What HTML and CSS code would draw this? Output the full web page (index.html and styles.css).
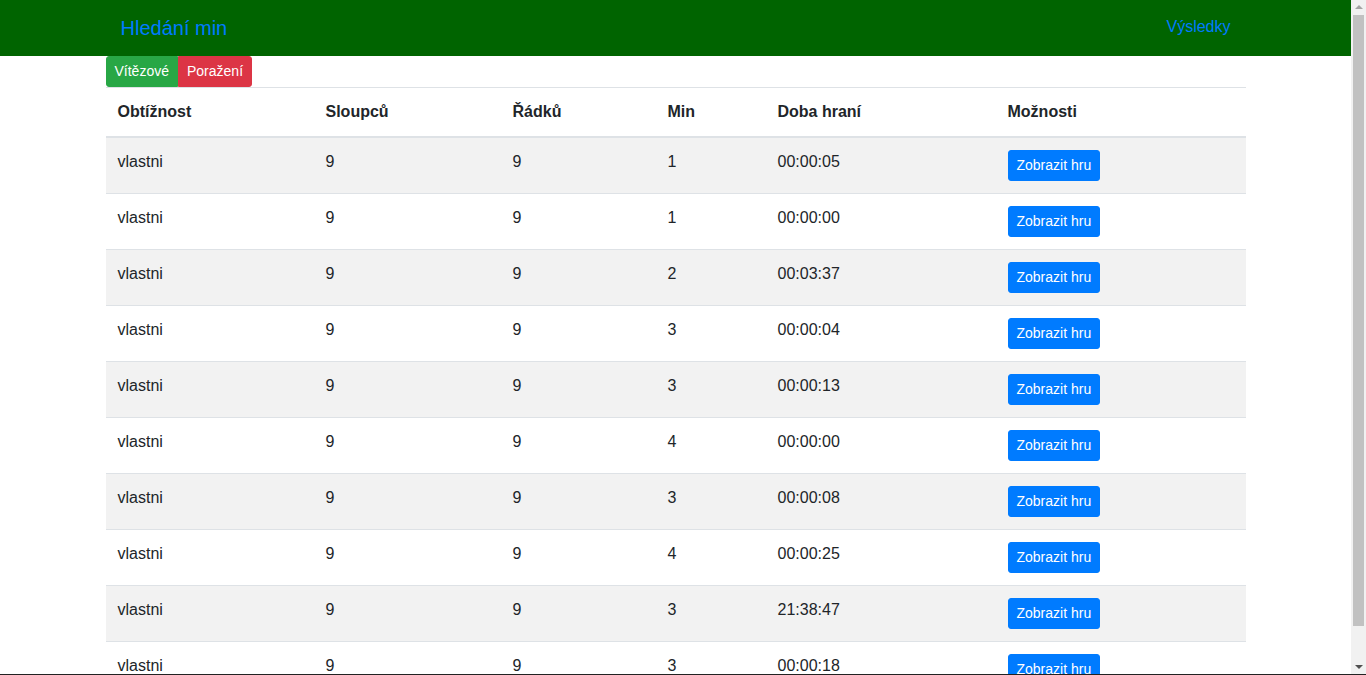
FILE: index.html
```html
<!DOCTYPE html>
<html lang="cs">
<head>
<meta charset="utf-8">
<title>Hledání min</title>
<link rel="stylesheet" href="styles.css">
</head>
<body>
<nav class="navbar">
  <div class="nav-inner">
    <a class="brand" href="#">Hledání min</a>
    <a class="nav-link" href="#">Výsledky</a>
  </div>
</nav>
<main class="container">
  <div class="btn-group">
    <button class="btn btn-sm btn-success">Vítězové</button>
    <button class="btn btn-sm btn-danger">Poražení</button>
  </div>
  <table class="table">
    <thead>
      <tr>
        <th class="c1">Obtížnost</th>
        <th class="c2">Sloupců</th>
        <th class="c3">Řádků</th>
        <th class="c4">Min</th>
        <th class="c5">Doba hraní</th>
        <th class="c6">Možnosti</th>
      </tr>
    </thead>
    <tbody>
      <tr><td>vlastni</td><td>9</td><td>9</td><td>1</td><td>00:00:05</td><td><button class="btn btn-sm btn-primary">Zobrazit hru</button></td></tr>
      <tr><td>vlastni</td><td>9</td><td>9</td><td>1</td><td>00:00:00</td><td><button class="btn btn-sm btn-primary">Zobrazit hru</button></td></tr>
      <tr><td>vlastni</td><td>9</td><td>9</td><td>2</td><td>00:03:37</td><td><button class="btn btn-sm btn-primary">Zobrazit hru</button></td></tr>
      <tr><td>vlastni</td><td>9</td><td>9</td><td>3</td><td>00:00:04</td><td><button class="btn btn-sm btn-primary">Zobrazit hru</button></td></tr>
      <tr><td>vlastni</td><td>9</td><td>9</td><td>3</td><td>00:00:13</td><td><button class="btn btn-sm btn-primary">Zobrazit hru</button></td></tr>
      <tr><td>vlastni</td><td>9</td><td>9</td><td>4</td><td>00:00:00</td><td><button class="btn btn-sm btn-primary">Zobrazit hru</button></td></tr>
      <tr><td>vlastni</td><td>9</td><td>9</td><td>3</td><td>00:00:08</td><td><button class="btn btn-sm btn-primary">Zobrazit hru</button></td></tr>
      <tr><td>vlastni</td><td>9</td><td>9</td><td>4</td><td>00:00:25</td><td><button class="btn btn-sm btn-primary">Zobrazit hru</button></td></tr>
      <tr><td>vlastni</td><td>9</td><td>9</td><td>3</td><td>21:38:47</td><td><button class="btn btn-sm btn-primary">Zobrazit hru</button></td></tr>
      <tr><td>vlastni</td><td>9</td><td>9</td><td>3</td><td>00:00:18</td><td><button class="btn btn-sm btn-primary">Zobrazit hru</button></td></tr>
    </tbody>
  </table>
</main>
<div class="fake-scrollbar" aria-hidden="true">
  <span class="arrow arrow-up"></span>
  <span class="thumb"></span>
  <span class="arrow arrow-down"></span>
</div>
<div class="bottom-edge" aria-hidden="true"></div>
</body>
</html>
```
FILE: styles.css
```css
* { box-sizing: border-box; }
html, body {
  margin: 0;
  padding: 0;
}
body {
  font-family: "Liberation Sans", Arial, sans-serif;
  font-size: 16px;
  line-height: 1.5;
  color: #212529;
  background: #fff;
  margin-right: 15px;
}
a { text-decoration: none; color: #007bff; }

.navbar {
  background: #006400;
  height: 56px;
}
.nav-inner {
  width: 1140px;
  margin: 0 auto;
  height: 56px;
  display: flex;
  align-items: center;
  justify-content: space-between;
  padding: 0 15px 0 15px;
}
.brand {
  font-size: 20px;
  line-height: 30px;
  margin-top: -1px;
}
.nav-link {
  font-size: 16px;
  line-height: 24px;
  margin-top: -2px;
}

.container {
  width: 1140px;
  margin: 0 auto;
}

.btn-group {
  display: flex;
}
.btn {
  font-family: inherit;
  border: 1px solid transparent;
  color: #fff;
  cursor: pointer;
}
.btn-sm {
  font-size: 14px;
  line-height: 21px;
  padding: 4px 8px;
  border-radius: 3px;
}
.btn-group .btn:first-child {
  border-top-right-radius: 0;
  border-bottom-right-radius: 0;
}
.btn-group .btn:last-child {
  border-top-left-radius: 0;
  border-bottom-left-radius: 0;
}
.btn-success { background: #28a745; border-color: #28a745; }
.btn-danger { background: #dc3545; border-color: #dc3545; }
.btn-primary { background: #007bff; border-color: #007bff; }

.table {
  width: 100%;
  border-collapse: collapse;
}
.table th,
.table td {
  padding: 12px;
  vertical-align: top;
  border-top: 1px solid #dee2e6;
  text-align: left;
}
.table th {
  font-weight: bold;
  border-bottom: 2px solid #dee2e6;
}
.table tbody tr:nth-child(odd) {
  background: #f2f2f2;
}
.c1 { width: 208px; }
.c2 { width: 187px; }
.c3 { width: 155px; }
.c4 { width: 110px; }
.c5 { width: 230px; }
.c6 { width: 250px; }

/* overlay mimicking the browser's scrollbar in the reference */
.fake-scrollbar {
  position: fixed;
  top: 0;
  right: 0;
  width: 15px;
  height: 100%;
  background: #f1f1f1;
}
.thumb {
  position: absolute;
  left: 2px;
  right: 2px;
  top: 15px;
  height: 611px;
  background: #c1c1c1;
}
.arrow {
  position: absolute;
  left: 4px;
  width: 0;
  height: 0;
  border-left: 4px solid transparent;
  border-right: 4px solid transparent;
}
.arrow-up {
  top: 5px;
  border-bottom: 4px solid #a3a3a3;
}
.arrow-down {
  bottom: 6px;
  border-top: 4px solid #505050;
}
.bottom-edge {
  position: fixed;
  left: 0;
  right: 0;
  bottom: 0;
  height: 1px;
  background: #222;
}
```
